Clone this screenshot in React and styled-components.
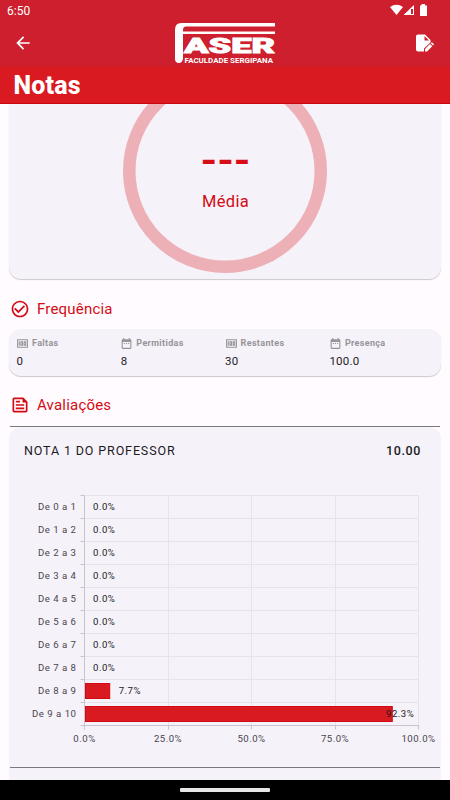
import React from "react";
import styled, { createGlobalStyle } from "styled-components";
import { MdArrowBack, MdCheckCircleOutline, MdDateRange, MdMoney, MdOutlineFeed } from "react-icons/md";

const GlobalStyle = createGlobalStyle`
  * { box-sizing: border-box; }
  body {
    margin: 0;
    background: #fffbff;
    font-family: Roboto, "Liberation Sans", sans-serif;
    color: #1c1b1f;
  }
`;

const Screen = styled.div`
  display: flex;
  flex-direction: column;
  width: 450px;
  height: 800px;
  overflow: hidden;
`;

const Header = styled.header`
  flex: none;
  height: 66px;
  background: #cd1f2d;
  color: #fff;
`;

const StatusBar = styled.div`
  display: flex;
  justify-content: space-between;
  height: 21px;
  padding: 0 22px 0 7px;
  font-size: 12px;
  line-height: 22px;
`;

const StatusIcons = styled.svg`
  width: 38px;
  height: 12px;
  margin-top: 4px;
`;

const Toolbar = styled.div`
  display: grid;
  grid-template-columns: 1fr 102px 1fr;
  align-items: center;
  height: 44px;
  padding: 0 16px;
`;

const LogoMark = styled.svg`
  width: 102px;
  height: 44px;
  margin: 1px 0 -1px;
`;

const BackIcon = styled(MdArrowBack)`
  width: 20px;
  height: 20px;
  margin-left: -3px;
`;

const EditIcon = styled.svg`
  justify-self: end;
  width: 19px;
  height: 20px;
`;

const TitleBar = styled.h1`
  flex: none;
  height: 38px;
  margin: 0;
  padding-left: 13.5px;
  border-bottom: 1px solid #c90510;
  background: #d91a21;
  color: #fff;
  font-size: 25px;
  font-weight: 800;
  line-height: 40px;
  letter-spacing: 0.2px;
`;

const Content = styled.main`
  flex: 1;
  min-height: 0;
  overflow: hidden;
  padding: 0 9px;
`;

const Card = styled.section`
  background: #f6f2f9;
  border-radius: ${({ $radius }) => $radius || "12px"};
  box-shadow: ${({ $flat }) => ($flat ? "none" : "0 1px 1px rgba(0, 0, 0, 0.2)")};
`;

const AverageCard = styled(Card)`
  height: 175px;
`;

const Ring = styled.svg`
  display: block;
  width: 100%;
  height: 175px;
`;

const SectionTitle = styled.h2`
  display: flex;
  align-items: center;
  gap: 8px;
  height: 20px;
  margin: ${({ $top }) => $top}px 0 0 1px;
  color: #d30b13;
  font-size: 15px;
  font-weight: 400;
  letter-spacing: 0.2px;

  svg {
    width: 20px;
    height: 20px;
    margin-right: -1px;
  }
`;

const FrequencyCard = styled(Card)`
  display: grid;
  grid-template-columns: repeat(4, 104.3px);
  height: 47px;
  margin-top: 10px;
  padding: 7px 0 0 7.5px;
`;

const StatLabel = styled.div`
  display: flex;
  align-items: center;
  gap: 3px;
  height: 14px;
  color: #969499;
  font-size: 9px;
  font-weight: 700;
  letter-spacing: 0.34px;

  svg {
    width: 13px;
    height: 13px;
    margin-left: -0.5px;
  }
`;

const StatValue = styled.div`
  margin-top: 4px;
  font-size: 11.5px;
  line-height: 14px;
  letter-spacing: 0.25px;
`;

const Divider = styled.hr`
  height: 1px;
  margin: ${({ $top }) => $top || 0}px 1px 0;
  border: 0;
  background: #7c7781;
`;

const GradeCard = styled(Card)`
  height: 353px;
`;

const GradeHeader = styled.div`
  display: flex;
  justify-content: space-between;
  padding: 15px 20px 0 15px;
  font-size: 12.5px;
  line-height: 17px;
  letter-spacing: 0.87px;

  strong {
    font-weight: 500;
    letter-spacing: 0.6px;
  }
`;

const Chart = styled.svg`
  display: block;
  width: 432px;
  height: 275px;
  margin-top: 33px;
  font-size: 9.6px;
  letter-spacing: 0.5px;
`;

const NavBar = styled.footer`
  flex: none;
  display: flex;
  justify-content: center;
  align-items: center;
  height: 20px;
  background: #000;
`;

const HomeHandle = styled.div`
  width: 90px;
  height: 4px;
  border-radius: 1px;
  background: #e6e5e7;
`;

const stats = [
  { label: "Faltas", value: "0", Icon: MdMoney },
  { label: "Permitidas", value: "8", Icon: MdDateRange },
  { label: "Restantes", value: "30", Icon: MdMoney },
  { label: "Presença", value: "100.0", Icon: MdDateRange },
];

const distribution = [0, 0, 0, 0, 0, 0, 0, 0, 7.7, 92.3];
const scale = [0, 25, 50, 75, 100];

const AXIS_X = 75.5;
const PLOT_WIDTH = 334;
const ROW = 23;
const TOP = 3.5;
const BOTTOM = TOP + ROW * distribution.length;

const toX = (percent) => AXIS_X + (percent / 100) * PLOT_WIDTH;
const snap = (x) => Math.floor(x) + 0.5;

const Logo = () => (
  <LogoMark viewBox="0 0 102 44">
    <path d="M1 8Q1 1 7 1H101V4.500H12Q9 4.500 9 8V37Q8 41 5 41Q1 41 1 37Z" fill="#fff" />
    <path d="M9 9.500H101V12H9Z" fill="#fff" />
    <text
      x="10"
      y="30.500"
      fill="#fff"
      stroke="#fff"
      strokeWidth="0.900"
      fontSize="21"
      fontWeight="900"
      textLength="91"
      lengthAdjust="spacingAndGlyphs"
    >
      ASER
    </text>
    <text x="10.500" y="40.500" fill="#fff" fontSize="7" fontWeight="700" textLength="88.500" lengthAdjust="spacingAndGlyphs">
      FACULDADE SERGIPANA
    </text>
  </LogoMark>
);

const GradeChart = () => (
  <Chart viewBox="0 0 432 275">
    <g stroke="#e7e3ea">
      {distribution.map((_, i) => (
        <path key={i} d={`M${AXIS_X} ${TOP + i * ROW}H${toX(100)}`} />
      ))}
      {scale.map((value) => (
        <path key={value} d={`M${snap(toX(value))} ${TOP}V${BOTTOM}`} />
      ))}
    </g>
    <g stroke="#c8c3cf">
      <path d={`M${AXIS_X} ${TOP}V${BOTTOM + 4}M${AXIS_X - 4} ${BOTTOM}H${toX(100)}`} />
      {distribution.map((_, i) => (
        <path key={i} d={`M${AXIS_X - 4} ${TOP + i * ROW}H${AXIS_X}`} />
      ))}
      {scale.map((value) => (
        <path key={value} d={`M${snap(toX(value))} ${BOTTOM}v4`} />
      ))}
    </g>
    {distribution.map((value, i) => {
      const middle = TOP + ROW * (i + 0.5);
      const last = value > 90;
      return (
        <g key={i}>
          {value > 0 && (
            <rect
              x={AXIS_X + 1}
              y={middle - 7.5}
              width={toX(value) - AXIS_X - 1.5}
              height="15"
              fill="#d91a21"
              stroke="#d30911"
            />
          )}
          <text x="67.500" y={middle + 3} textAnchor="end" fill="#49454f">{`De ${i} a ${i + 1}`}</text>
          <text x={last ? 377 : toX(value) + 8.5} y={middle + 3} fill="#1c1b1f">
            {value.toFixed(1)}%
          </text>
        </g>
      );
    })}
    {scale.map((value) => (
      <text key={value} x={toX(value)} y={BOTTOM + 16.5} textAnchor="middle" fill="#49454f">
        {value.toFixed(1)}%
      </text>
    ))}
  </Chart>
);

const App = () => (
  <Screen>
    <GlobalStyle />
    <Header>
      <StatusBar>
        6:50
        <StatusIcons viewBox="0 0 38 12" fill="#fff">
          <path d="M0 3Q6.500-1.500 13 3L6.500 11Z" />
          <path fillRule="evenodd" d="M13.500 11L24 1V11ZM21 5V10H23V5Z" />
          <path d="M30 1.500H31.500V0H35V1.500H37V12H30Z" />
        </StatusIcons>
      </StatusBar>
      <Toolbar>
        <BackIcon />
        <Logo />
        <EditIcon viewBox="0 0 19 20" fill="#fff">
          <path d="M3 1.500H10L15.500 7V9.500L9 15.500V18.500H3Q1 18.500 1 16.500V3.500Q1 1.500 3 1.500ZM9.500 3V7.500H14Z" fillRule="evenodd" />
          <path d="M10 18.500V16L15 11L17.300 13.300L12 18.500ZM15.700 10.300L17 9.300L19 11.500L18 12.600Z" />
        </EditIcon>
      </Toolbar>
    </Header>
    <TitleBar>Notas</TitleBar>
    <Content>
      <AverageCard $radius="0 0 12px 12px">
        <Ring viewBox="0 0 432 175">
          <circle cx="216" cy="67" r="95.750" fill="none" stroke="#ecb0b6" strokeWidth="12.500" />
          <text
            x="191.500"
            y="69.500"
            fill="#d80e17"
            fontSize="38"
            fontWeight="700"
            textLength="50"
            lengthAdjust="spacingAndGlyphs"
          >
            ---
          </text>
          <text x="216.500" y="102.500" textAnchor="middle" fill="#d30b13" fontSize="16.500" letterSpacing="0.300">
            Média
          </text>
        </Ring>
      </AverageCard>
      <SectionTitle $top={20}>
        <MdCheckCircleOutline />
        Frequência
      </SectionTitle>
      <FrequencyCard>
        {stats.map(({ label, value, Icon }) => (
          <div key={label}>
            <StatLabel>
              <Icon />
              {label}
            </StatLabel>
            <StatValue>{value}</StatValue>
          </div>
        ))}
      </FrequencyCard>
      <SectionTitle $top={19}>
        <MdOutlineFeed />
        Avaliações
      </SectionTitle>
      <Divider $top={11} />
      <GradeCard $radius="12px 12px 0 0" $flat>
        <GradeHeader>
          NOTA 1 DO PROFESSOR
          <strong>10.00</strong>
        </GradeHeader>
        <GradeChart />
        <Divider />
      </GradeCard>
    </Content>
    <NavBar>
      <HomeHandle />
    </NavBar>
  </Screen>
);

export default App;
